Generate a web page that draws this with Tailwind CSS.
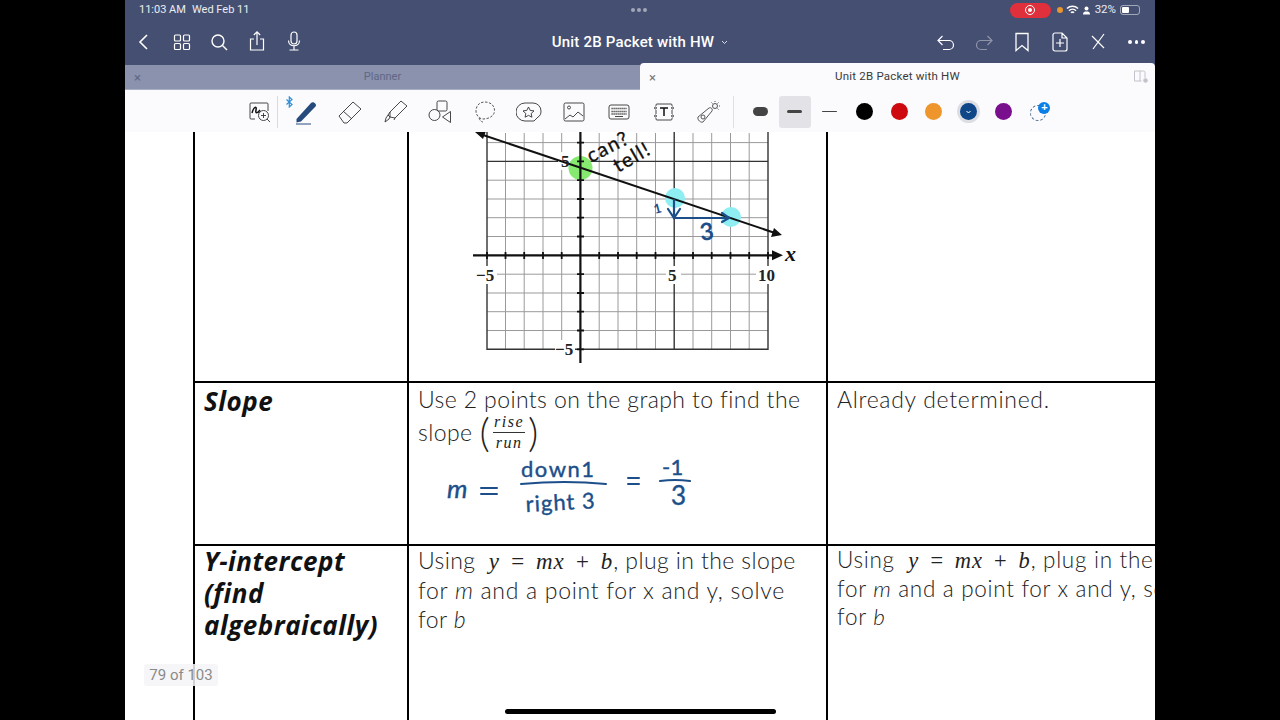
<!DOCTYPE html>
<html lang="en">
<head>
<meta charset="UTF-8">
<title>Unit 2B Packet with HW</title>
<script src="https://cdn.jsdelivr.net/npm/@tailwindcss/browser@4"></script>
</head>
<body class="bg-black font-['Inter',sans-serif]">
<div class="relative mx-auto w-[1030px] h-[720px] overflow-hidden bg-white flex flex-col">

  <!-- status bar -->
  <div class="h-[20px] bg-[#454f71] flex items-center text-white/90 pl-[14px] pr-[15px] relative">
    <span class="text-[11px] font-['Roboto',sans-serif] w-[53px]">11:03 AM</span>
    <span class="text-[11px] font-['Roboto',sans-serif]">Wed Feb 11</span>
    <div class="absolute left-[506px] top-[8px] flex gap-[2px]">
      <span class="w-[4px] h-[4px] rounded-full bg-white/50"></span>
      <span class="w-[4px] h-[4px] rounded-full bg-white/50"></span>
      <span class="w-[4px] h-[4px] rounded-full bg-white/50"></span>
    </div>
    <div class="ml-auto flex items-center">
      <span class="w-[41px] h-[15px] rounded-full bg-[#e0303c] flex items-center justify-center">
        <span class="w-[10px] h-[10px] rounded-full border border-white flex items-center justify-center"><span class="w-[4px] h-[4px] rounded-full bg-white"></span></span>
      </span>
      <span class="ml-[6px] w-[6px] h-[6px] rounded-full bg-[#e8962e]"></span>
      <svg class="ml-[3px]" width="13" height="10" viewBox="0 0 13 10" fill="none" stroke="white" stroke-width="1.6"><path d="M1 3.5a8 8 0 0 1 11 0M3 5.7a5 5 0 0 1 7 0M5 7.8a2 2 0 0 1 3 0"/></svg>
      <svg class="ml-[3px]" width="9" height="9" viewBox="0 0 9 9" fill="white"><circle cx="4.5" cy="2.5" r="2"/><path d="M1 8.5c0-2.500 1.500-3 3.500-3s3.500.5 3.500 3z"/></svg>
      <span class="ml-[4px] text-[11.500px] font-['Roboto',sans-serif] text-white/90">32%</span>
      <span class="ml-[4px] w-[20px] h-[10px] rounded-[3px] border border-white/50 p-[1px]"><span class="block w-[7px] h-full bg-white rounded-[1px]"></span></span>
    </div>
  </div>

  <!-- nav bar -->
  <div class="h-[43px] bg-[#454f71] relative flex items-center justify-center text-white pt-[2px]">
    <div class="absolute left-[9px] top-[8px] flex">
      <svg class="w-[16px] h-[28px] mr-[23px]" viewBox="0 0 16 28" fill="none" stroke="white" stroke-width="1.6"><path d="M13 7l-7 7 7 7"/></svg>
      <svg class="w-[18px] h-[28px] mr-[19px]" viewBox="0 0 18 28" fill="none" stroke="white" stroke-width="1.2"><rect x="1.500" y="7" width="6" height="6" rx="1"/><rect x="10.500" y="7" width="6" height="6" rx="1"/><rect x="1.500" y="15.500" width="6" height="6" rx="1"/><rect x="10.500" y="15.500" width="6" height="6" rx="1"/></svg>
      <svg class="w-[18px] h-[28px] mr-[21px]" viewBox="0 0 18 28" fill="none" stroke="white" stroke-width="1.400"><circle cx="8" cy="13" r="6"/><path d="M12.500 17.500l4.500 4.500"/></svg>
      <svg class="w-[16px] h-[28px] mr-[22px]" viewBox="0 0 16 28" fill="none" stroke="white" stroke-width="1.200"><path d="M5 11H1.500v11h13V11H11M8 17V4M4.800 7L8 3.800 11.200 7"/></svg>
      <svg class="w-[14px] h-[28px]" viewBox="0 0 14 28" fill="none" stroke="white" stroke-width="1.200"><rect x="4" y="4" width="6" height="12" rx="3"/><path d="M1.500 12.500c0 7 11 7 11 0M7 18v3.500M2.500 22h9"/></svg>
    </div>
    <span class="text-[15px] font-medium font-['Roboto',sans-serif] tracking-[0.2px]">Unit 2B Packet with HW</span>
    <svg class="ml-[7px]" width="7" height="5" viewBox="0 0 7 5" fill="none" stroke="white" stroke-opacity=".8" stroke-width="1"><path d="M1 1l2.500 2.500L6 1"/></svg>
    <div class="absolute left-[811px] top-[8px] flex">
      <svg class="w-[20px] h-[28px] mr-[18px]" viewBox="0 0 20 28" fill="none" stroke="white" stroke-width="1.200"><path d="M6.500 8L2 12.500 6.500 17M2 12.500h11a4.500 4.500 0 0 1 0 9H7"/></svg>
      <svg class="w-[20px] h-[28px] mr-[21px]" viewBox="0 0 20 28" fill="none" stroke="white" stroke-opacity=".4" stroke-width="1.200"><path d="M13.500 8L18 12.500 13.500 17M18 12.500H7a4.500 4.500 0 0 0 0 9h6"/></svg>
      <svg class="w-[14px] h-[28px] mr-[23px]" viewBox="0 0 14 28" fill="none" stroke="white" stroke-width="1.300"><path d="M1 5.500h12v17l-6-5-6 5z"/></svg>
      <svg class="w-[16px] h-[28px] mr-[22px]" viewBox="0 0 16 28" fill="none" stroke="white" stroke-width="1.200"><path d="M1 7a2 2 0 0 1 2-2h7l5 5v11a2 2 0 0 1-2 2H3a2 2 0 0 1-2-2zM10 5v5h5M8 11v8M4 15h8"/></svg>
      <svg class="w-[16px] h-[28px] mr-[22px]" viewBox="0 0 16 28" fill="none" stroke="white" stroke-width="1.200"><path d="M2 8l12 12M14 6L3 21"/></svg>
      <span class="flex items-center gap-[3px] h-[28px]"><span class="w-[3.500px] h-[3.500px] rounded-full bg-white"></span><span class="w-[3.500px] h-[3.500px] rounded-full bg-white"></span><span class="w-[3.500px] h-[3.500px] rounded-full bg-white"></span></span>
    </div>
  </div>

  <!-- tabs -->
  <div class="h-[27px] bg-[#454f71] flex items-end relative z-10">
    <div class="w-[515px] h-[25px] bg-[#8a92ae] relative flex items-center justify-center text-[11px] font-['Roboto',sans-serif] text-[#5f6785] border-b border-[#a8aec4] pt-[1px]">
      <span class="absolute left-[9px] text-[13px] leading-none text-[#5f6785]">×</span>
      Planner
    </div>
    <div class="w-[515px] h-[27px] bg-[#fbfbfd] rounded-t-[4px] relative flex items-center justify-center text-[11.500px] font-['Roboto',sans-serif] text-[#3a3a3a] tracking-[0.2px] pt-[1px]">
      <span class="absolute left-[9px] text-[13px] leading-none text-[#777]">×</span>
      Unit 2B Packet with HW
      <svg class="absolute right-[7px] top-[7px]" width="15" height="14" viewBox="0 0 15 14" fill="none" stroke="#c2c4c9" stroke-width="1"><path d="M12 8V2.500a1.500 1.500 0 0 0-1.500-1.500h-9v10h7M7 1v10"/><circle cx="12.500" cy="10.500" r="2.300" fill="#c2c4c9" stroke="none"/></svg>
    </div>
  </div>

  <!-- tool bar -->
  <div class="h-[42px] bg-[#fbfbfd] flex items-center pl-[112.500px] pt-[1px] shrink-0 relative z-10">
    <div class="w-[40px] h-[32px] border-r border-[#d9d9de] flex items-center justify-center pl-[5px]">
      <svg width="22" height="24" viewBox="0 0 22 24" fill="none" stroke="#333" stroke-width=".9"><path d="M6 19H2a1 1 0 0 1-1-1V4a1 1 0 0 1 1-1h16a1 1 0 0 1 1 1v7"/><path d="M3 13c2-7 5-7 4-3s2 3 4 0" stroke-width="1.500" stroke="#111"/><circle cx="14.500" cy="15.500" r="5"/><path d="M14.500 13v5M12 15.500h5M18 19l3 3"/></svg>
    </div>
    <div class="w-[49.900px] ml-[5px] -mr-[5px] flex items-center justify-center relative">
      <svg class="absolute left-[3px] -top-[3px]" width="7" height="12" viewBox="0 0 7 12" fill="none" stroke="#2f8fd8" stroke-width="1.200"><path d="M.5 3.500l5.500 5L3.300 11V1L6 3.500.5 8.500"/></svg>
      <svg width="26" height="26" viewBox="0 0 26 26" fill="none"><path d="M2.500 20L17 4c2-2.500 6.500 1 4.500 3.500L7 22.500l-4.500 1z" fill="#264a7c"/><path d="M2 25h15" stroke="#264a7c" stroke-width="1"/></svg>
    </div>
    <div class="w-[44.900px] flex items-center justify-center">
      <svg width="26" height="24" viewBox="0 0 26 24" fill="none" stroke="#333" stroke-width=".9"><path d="M2 16L16 2l8 7-14 14H7z"/><path d="M6 11l9 8"/></svg>
    </div>
    <div class="w-[44.900px] flex items-center justify-center">
      <svg width="26" height="24" viewBox="0 0 26 24" fill="none" stroke="#333" stroke-width=".9"><path d="M8 12L19 1l6 5L13 18l-5-1zM8 12l-2 3 2 2-1 2-4 3 1-4 2-3M13 18l-1 2"/></svg>
    </div>
    <div class="w-[44.900px] flex items-center justify-center">
      <svg width="24" height="24" viewBox="0 0 24 24" fill="none" stroke="#333" stroke-width=".9"><rect x="9" y="1" width="10" height="10" rx="1.500"/><circle cx="6.500" cy="15" r="5.500"/><path d="M22.500 11.500v11l-8-5.500z"/></svg>
    </div>
    <div class="w-[44.900px] flex items-center justify-center">
      <svg width="22" height="24" viewBox="0 0 22 24" fill="none" stroke="#444" stroke-width=".9" stroke-dasharray="2.500 1.500"><path d="M11 2c5 0 9.500 3 9.500 8.500S15 19 9 19c-3 0-7-3-7-8 0-6 4-9 9-9z"/><path d="M5 18c1 3 3 4 4 4"/></svg>
    </div>
    <div class="w-[44.900px] flex items-center justify-center">
      <svg width="26" height="20" viewBox="0 0 26 20" fill="none" stroke="#333" stroke-width=".9"><path d="M9 1h8a8 8 0 0 1 8 8c0 3-1 5-3 6l-4 4H9A8.500 8.500 0 0 1 9 1z"/><path d="M12.500 5l1.700 3.400 3.800.5-2.800 2.600.7 3.700-3.400-1.800-3.400 1.800.7-3.700L7 8.900l3.800-.5z"/></svg>
    </div>
    <div class="w-[44.900px] flex items-center justify-center">
      <svg width="22" height="20" viewBox="0 0 22 20" fill="none" stroke="#333" stroke-width=".9"><rect x="1" y="1" width="20" height="18" rx="1.500"/><circle cx="6" cy="5.500" r="1.500"/><path d="M2 17l5-4 3 2 5-5 5 4"/></svg>
    </div>
    <div class="w-[44.900px] flex items-center justify-center">
      <svg width="22" height="16" viewBox="0 0 22 16" fill="none" stroke="#333" stroke-width=".9"><rect x="1" y="1" width="20" height="14" rx="2"/><path d="M3.500 4.500h15M3.500 7.500h15M3.500 10h15" stroke-dasharray="1.200 .8" stroke-width="1.500"/><path d="M7 12.500h8"/></svg>
    </div>
    <div class="w-[44.900px] flex items-center justify-center">
      <svg width="22" height="20" viewBox="0 0 22 20" fill="none" stroke="#333" stroke-width=".9"><path d="M3 4V3a1 1 0 0 1 1-1h14a1 1 0 0 1 1 1v1M3 8v4M19 8v4M3 16v1a1 1 0 0 0 1 1h14a1 1 0 0 0 1-1v-1"/><circle cx="2.500" cy="6" r="1"/><circle cx="19.500" cy="6" r="1"/><circle cx="2.500" cy="14" r="1"/><circle cx="19.500" cy="14" r="1"/><path d="M7 6h8M11 6v8" stroke-width="1.500" stroke="#111"/></svg>
    </div>
    <div class="w-[44.900px] flex items-center justify-center">
      <svg width="26" height="24" viewBox="0 0 26 24" fill="none" stroke="#444" stroke-width=".9"><path d="M2 17l11-9c2-1 4 1 3 3l-9 11c-2 1-6-2-5-5z"/><circle cx="7" cy="17" r="2"/><circle cx="19" cy="6" r="2.500"/><path d="M19 1v1M24 6h-1M22.500 2.500l-1 1M22.500 9.500l-1-1M15.500 2.500l1 1"/></svg>
    </div>
    <div class="ml-[2px] w-px h-[32px] bg-[#e0e0e4] mr-[8.500px]"></div>
    <div class="w-[34.700px] flex items-center justify-center"><span class="w-[15px] h-[9px] rounded-full bg-[#444]"></span></div>
    <div class="w-[32px] mx-[1.350px] h-[32px] rounded-[3px] bg-[#e3e3e7] flex items-center justify-center"><span class="w-[15px] h-[2.500px] rounded-full bg-[#444]"></span></div>
    <div class="w-[34.700px] flex items-center justify-center"><span class="w-[15px] h-[1.500px] rounded-full bg-[#444]"></span></div>
    <div class="w-[34.700px] flex items-center justify-center"><span class="w-[17px] h-[17px] rounded-full bg-black"></span></div>
    <div class="w-[34.700px] flex items-center justify-center"><span class="w-[17px] h-[17px] rounded-full bg-[#cc0a0f]"></span></div>
    <div class="w-[34.700px] flex items-center justify-center"><span class="w-[17px] h-[17px] rounded-full bg-[#ee962c]"></span></div>
    <div class="w-[34.700px] flex items-center justify-center">
      <span class="w-[17px] h-[17px] rounded-full bg-[#0e4688] ring-[3px] ring-[#dcdee3] flex items-center justify-center">
        <svg width="5" height="4" viewBox="0 0 5 4" fill="none" stroke="white" stroke-width="1"><path d="M.5 1l2 2 2-2"/></svg>
      </span>
    </div>
    <div class="w-[34.700px] flex items-center justify-center"><span class="w-[17px] h-[17px] rounded-full bg-[#7a0f8e]"></span></div>
    <div class="w-[34.700px] flex items-center justify-center relative">
      <span class="w-[16px] h-[16px] mt-[2px] rounded-full border border-dashed border-[#4b6f90]"></span>
      <span class="absolute left-[18px] -top-[1px] w-[12px] h-[12px] rounded-full bg-[#0c7fe6] text-white text-[11px] leading-[11px] text-center font-bold font-['Liberation_Sans',sans-serif]">+</span>
    </div>
  </div>

  <!-- document page -->
  <div class="flex-1 pl-[68px] overflow-hidden font-['Lato',sans-serif] font-light text-[#222]">
    <div class="w-[1100px] border-l-2 border-black">
      <!-- graph row -->
      <div class="h-[249px] flex">
        <div class="w-[212px]"></div>
        <div class="w-[419px] border-l-2 border-black">
          <svg class="block" width="417" height="249" viewBox="409 132 417 249" fill="none">
            <path stroke="#9a9a9a" stroke-width="1" d="M505.500 133V349M524.200 133V349M543 133V349M561.700 133V349M599.200 133V349M618 133V349M636.700 133V349M655.500 133V349M693 133V349M711.700 133V349M730.500 133V349M749.200 133V349M487 142.600H768M487 180.200H768M487 199H768M487 217.700H768M487 236.500H768M487 274.200H768M487 293H768M487 311.700H768M487 330.500H768"/>
            <path stroke="#333" stroke-width="1.400" d="M487 132V349.300H768V132M487 161.400H768M674.200 132V349"/>
            <g fill="white" stroke="none"><rect x="477" y="266" width="20" height="18"/><rect x="666" y="266" width="15" height="18"/><rect x="756" y="266" width="22" height="18"/><rect x="555" y="340" width="20" height="18"/><rect x="558" y="152" width="14" height="18"/></g>
            <circle cx="580.500" cy="168" r="12" fill="#86ea70"/>
            <circle cx="675" cy="198" r="10" fill="#8eeef2"/>
            <circle cx="731" cy="217" r="10" fill="#8eeef2"/>
            <path stroke="#111" stroke-width="2.200" d="M473 255.300H775M580.400 132V363"/>
            <path stroke="#111" stroke-width="1.800" d="M487 252v7M505.500 252v7M524.200 252v7M543 252v7M561.700 252v7M599.200 252v7M618 252v7M636.700 252v7M655.500 252v7M674.200 252v7M693 252v7M711.700 252v7M730.500 252v7M749.200 252v7M768 252v7M577 142.600h7M577 161.400h7M577 180.200h7M577 199h7M577 217.700h7M577 236.500h7M577 274.200h7M577 293h7M577 311.700h7M577 330.500h7M577 349.300h7"/>
            <path fill="#111" d="M783 255.300l-11-5v10z"/>
            <path stroke="#111" stroke-width="2" d="M480 134L775 233"/>
            <path fill="#111" d="M782 235l-11 2 3-9zM475 132l11-1-3 8z"/>
            <g fill="#222" font-family="Liberation Serif, serif" font-size="17" font-weight="700">
              <text x="476" y="281">−5</text><text x="668" y="281">5</text><text x="758" y="281">10</text><text x="555" y="355">−5</text><text x="561" y="167">5</text>
              <text x="785" y="261" font-size="22" font-style="italic" fill="#111">x</text>
            </g>
            <g fill="#111" stroke="#111" stroke-width=".3" font-family="Lato, sans-serif" font-weight="400" font-size="20" letter-spacing="1.500">
              <text transform="translate(591 163) rotate(-27)">can?</text>
              <text transform="translate(618 173) rotate(-30)">tell!</text>
            </g>
            <path stroke="#1c4f8a" stroke-width="2.200" stroke-linecap="round" d="M674 200V218H728M668 209l6 9 6-9M722 213l7 5-7 4"/>
            <g fill="#1c4f8a" font-family="Lato, sans-serif" font-weight="700">
              <text transform="translate(655 214) rotate(-15)" font-size="13">1</text>
              <text transform="translate(701 241) rotate(-8)" font-size="24">3</text>
            </g>
          </svg>
        </div>
        <div class="flex-1 border-l-2 border-black"></div>
      </div>
      <!-- slope row -->
      <div class="h-[163px] flex border-t-2 border-black">
        <div class="w-[212px] pl-[9px] -mt-[1px] text-[26px] tracking-[0.5px] font-bold italic text-[#111] font-['Open_Sans',sans-serif]">Slope</div>
        <div class="w-[419px] border-l-2 border-black pl-[9px] relative text-[23px] leading-[33px] tracking-[0.4px]">
          <p class="h-[33px]">Use 2 points on the graph to find the</p>
          <p class="h-[33px] flex items-center">slope
            <span class="ml-[7px] text-[40px] font-light leading-[33px]">(</span>
            <span class="inline-flex flex-col items-center text-[16px] leading-[20px] italic font-normal font-['Liberation_Serif',serif] tracking-[1.500px] mx-[3px]"><span class="border-b border-[#333] px-[1px]">rise</span><span>run</span></span>
            <span class="text-[40px] font-light leading-[33px]">)</span>
          </p>
          <svg class="absolute left-0 top-0" width="417" height="161" viewBox="409 383 417 161" fill="none">
            <path stroke="#1c4f8a" stroke-width="2" stroke-linecap="round" d="M521 484Q565 480 606 484M660 481Q675 479 690 481M628 478h11M628 484h11M481 488h16M481 494h16"/>
            <g fill="#1c4f8a" stroke="#1c4f8a" stroke-width=".4" font-family="Lato, sans-serif" font-weight="400">
              <text x="447" y="498" font-size="26" font-style="italic">m</text>
              <text x="521" y="477" font-size="22" letter-spacing="1.500">down1</text>
              <text transform="translate(526 512) rotate(-3)" font-size="22" letter-spacing="1">right 3</text>
              <text x="662" y="475" font-size="22">-1</text>
              <text x="671" y="505" font-size="26">3</text>
            </g>
          </svg>
        </div>
        <div class="flex-1 border-l-2 border-black pl-[9px] text-[23px] leading-[33px] tracking-[0.7px]">Already determined.</div>
      </div>
      <!-- y-intercept row -->
      <div class="h-[176px] flex border-t-2 border-black">
        <div class="w-[212px] pl-[9px] -mt-[1px] text-[26px] tracking-[0.5px] leading-[32px] font-bold italic text-[#111] font-['Open_Sans',sans-serif]">Y-intercept<br>(find<br>algebraically)</div>
        <div class="w-[419px] border-l-2 border-black pl-[9px] text-[23px] leading-[29px] tracking-[0.4px]">
          <p class="h-[29.500px]">Using&nbsp; <i class="font-['Liberation_Serif',serif] font-normal tracking-[1px] [word-spacing:3px]">y = mx + b</i>, plug in the slope</p>
          <p class="h-[29.500px] tracking-[0.7px]">for <i>m</i> and a point for x and y, solve</p>
          <p class="h-[29.500px]">for <i>b</i></p>
        </div>
        <div class="w-[419px] border-l-2 border-black pl-[9px] text-[22.500px] leading-[28px] tracking-[0.7px] whitespace-nowrap">
          <p>Using&nbsp; <i class="font-['Liberation_Serif',serif] font-normal tracking-[1px] [word-spacing:3px]">y = mx + b</i>, plug in the slope</p>
          <p>for <i>m</i> and a point for x and y, solve</p>
          <p>for <i>b</i></p>
        </div>
      </div>
    </div>
  </div>

  <!-- page badge and home indicator -->
  <div class="absolute left-[19px] top-[664px] w-[74px] h-[22px] rounded-[3px] bg-[#f5f5f7]/85 text-center text-[15px] leading-[22px] text-[#8a8a8a] font-['Roboto',sans-serif]">79 of 103</div>
  <div class="absolute left-[380px] top-[709px] w-[271px] h-[5px] rounded-full bg-black"></div>
</div>
</body>
</html>
